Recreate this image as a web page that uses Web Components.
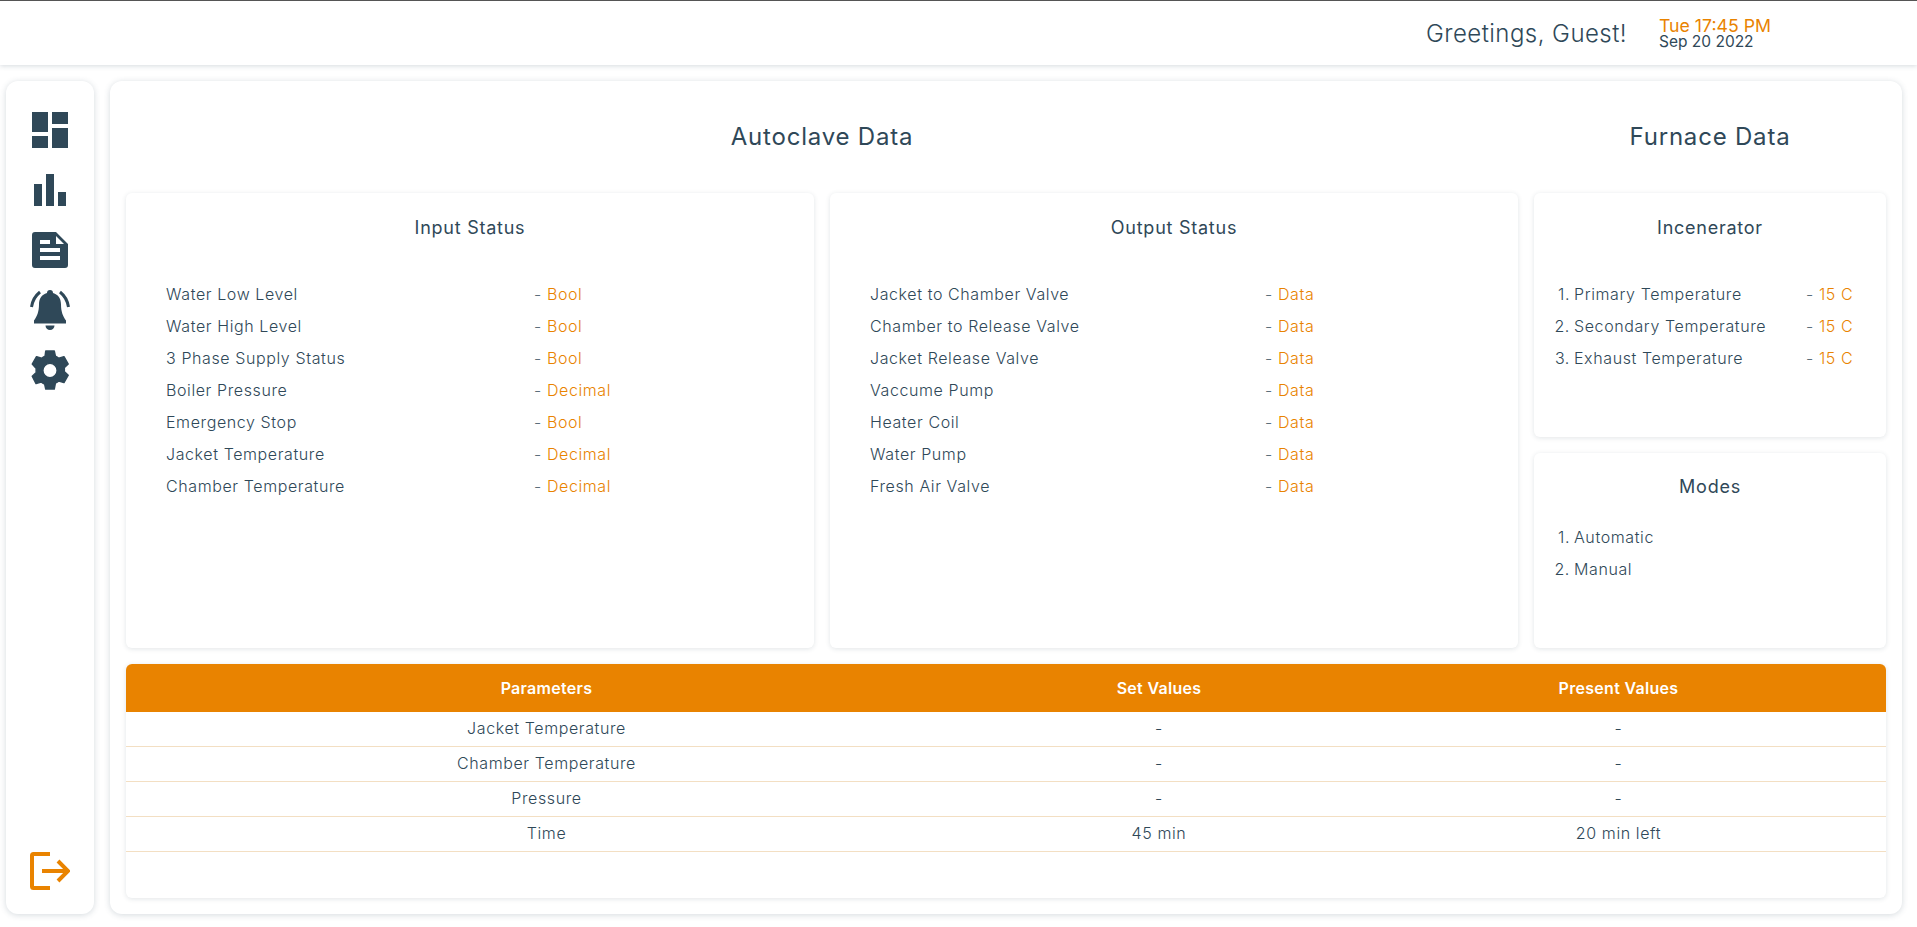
<!DOCTYPE html>
<html>
<head>
<meta charset="utf-8">
<title>Dashboard</title>
<style>
  html, body { margin: 0; height: 100%; }
  body {
    background: #fff;
    color: #2f4858;
    font-family: Inter, "Noto Sans", sans-serif;
    font-weight: 300;
    font-size: 16px;
  }
  #app { height: 927px; display: flex; flex-direction: column; overflow: hidden; }
  #content { flex: 1; display: flex; gap: 16px; padding: 16px 15px 13px 6px; min-height: 0; }
</style>
</head>
<body>

<template id="tpl-header">
  <style>
    :host {
      display: flex; align-items: center; justify-content: flex-end;
      height: 65px; box-sizing: border-box;
      border-top: 1px solid #555;
      background: #fff;
      box-shadow: 0 1px 5px rgba(47, 72, 88, .2);
      padding-right: 130px;
      flex: none;
    }
    .hello { font-size: 24px; letter-spacing: .45px; margin-right: 32px; padding-top: 1px; }
    .clock { display: flex; flex-direction: column; width: 128px; font-weight: 400; line-height: 16px; padding-top: 1px; }
    .time { color: #e98300; font-size: 17.7px; }
    .date { font-size: 15.5px; }
  </style>
  <span class="hello"><slot name="hello"></slot></span>
  <div class="clock">
    <span class="time"><slot name="time"></slot></span>
    <span class="date"><slot name="date"></slot></span>
  </div>
</template>

<template id="tpl-sidenav">
  <style>
    :host {
      display: flex; flex-direction: column; justify-content: space-between; align-items: center;
      width: 88px; flex: none; box-sizing: border-box;
      padding: 31px 0 24px;
      background: #fff; border-radius: 12px;
      box-shadow: 0 1px 6px rgba(47, 72, 88, .2);
    }
    .top { display: flex; flex-direction: column; gap: 26px; align-items: center; }
    svg { display: block; fill: #2f4858; }
    .bell { margin-top: -4px; }
    .gear { margin-top: -6px; }
    .out { fill: none; stroke: #e98300; stroke-width: 4; }
  </style>
  <div class="top">
    <svg width="36" height="36" viewBox="3 3 18 18"><path d="M3 13h8V3H3v10zm0 8h8v-6H3v6zm10 0h8V11h-8v10zm0-18v6h8V3h-8z"/></svg>
    <svg width="36" height="32" viewBox="0 0 36 32"><rect x="2" y="10" width="8" height="22"/><rect x="14" y="0" width="8" height="32"/><rect x="26" y="18" width="8" height="14"/></svg>
    <svg width="36" height="36" viewBox="0 0 36 36"><path fill-rule="evenodd" d="M3 0H24L36 12V33a3 3 0 0 1-3 3H3a3 3 0 0 1-3-3V3a3 3 0 0 1 3-3zM24 4V12H32zM8 8v4h10V8zM8 16v4h20v-4zM8 24v4h20v-4z"/></svg>
    <svg class="bell" width="40" height="40" viewBox="0 0 40 40"><path d="M20 0a3 3 0 0 1 3 3c5.5 1.5 8 6 8 11.5 0 7 2 12 5 16v3H4v-3c3-4 5-9 5-16 0-5.500 2.500-10 8-11.500a3 3 0 0 1 3-3zM15.500 35.500h9a4.500 4.500 0 0 1-9 0z"/><path d="M1.500 17C2.500 10 5 6 10 2M38.500 17C37.500 10 35 6 30 2" fill="none" stroke="#2f4858" stroke-width="3"/></svg>
    <svg class="gear" width="38" height="40" viewBox="-1 -1 40 42"><path fill-rule="evenodd" stroke="#2f4858" stroke-width="1.5" stroke-linejoin="round" d="M14.500 0h9l1.200 5.500c1.300.5 2.500 1.200 3.600 2.100l5.400-1.700 4.500 7.800-4.200 3.800c.2 1.400.2 2.800 0 4.200l4.200 3.800-4.500 7.800-5.400-1.700c-1.100.9-2.300 1.600-3.600 2.100L23.500 40h-9l-1.200-5.300c-1.300-.5-2.500-1.200-3.600-2.100l-5.400 1.700L.3 26.500l4.200-3.800c-.2-1.400-.2-2.800 0-4.200L.3 13.700l4.500-7.800 5.400 1.700c1.100-.9 2.300-1.600 3.600-2.100zM19 13a7.500 7.500 0 1 0 0 15 7.500 7.500 0 0 0 0-15z"/></svg>
  </div>
  <svg class="out" width="40" height="38" viewBox="0 0 40 38"><path d="M20 2H3.500a1.500 1.500 0 0 0-1.500 1.500v31A1.500 1.500 0 0 0 3.500 36H20M12 19h26M28 9l10 10-10 10"/></svg>
</template>

<template id="tpl-card">
  <style>
    :host {
      display: flex; flex-direction: column; box-sizing: border-box; min-height: 0;
      background: #fff; border-radius: 6px;
      box-shadow: 0 1px 5px rgba(47, 72, 88, .14);
    }
    h2 {
      margin: 0; font-size: 18px; font-weight: 400; text-align: center;
      letter-spacing: .75px; line-height: 24px;
      padding-top: var(--title-top, 23px);
      padding-bottom: var(--title-gap, 38px);
    }
    .body { padding-left: var(--body-left, 40px); }
  </style>
  <h2 id="title"></h2>
  <div class="body"><slot></slot></div>
</template>

<template id="tpl-row">
  <style>
    :host {
      display: grid; grid-template-columns: var(--label-col, 368px) auto;
      height: 32px; align-items: center;
      font-size: 16px; letter-spacing: .6px;
      white-space: nowrap;
    }
    .label { position: relative; }
    .num { position: absolute; right: 100%; margin-right: 4px; }
    .dash { color: #5c6f7b; }
    .val { color: #e98300; }
  </style>
  <div class="label"><span class="num" id="num"></span><span id="label"></span></div>
  <div id="right"><span class="dash">-</span> <span class="val" id="val"></span></div>
</template>

<template id="tpl-table">
  <style>
    :host {
      display: block; height: 234px; box-sizing: border-box; flex: none;
      background: #fff; border-radius: 6px; overflow: hidden;
      box-shadow: 0 1px 5px rgba(47, 72, 88, .14);
    }
    table { width: 100%; border-collapse: collapse; table-layout: fixed; }
    th {
      background: #e98300; color: #fff; height: 48px; padding: 0;
      font-size: 16px; font-weight: 600; letter-spacing: .3px;
    }
    td {
      height: 31px; padding: 0 0 3px; text-align: center;
      font-size: 16px; letter-spacing: .6px;
      border-bottom: 1px solid #f3dfc3;
    }
    col.a { width: 841px; }
    col.b { width: 384px; }
  </style>
  <table>
    <colgroup><col class="a"><col class="b"><col></colgroup>
    <thead><tr><th>Parameters</th><th>Set Values</th><th>Present Values</th></tr></thead>
    <tbody id="rows"></tbody>
  </table>
</template>

<template id="tpl-panel">
  <style>
    :host {
      flex: 1; min-width: 0; display: flex; flex-direction: column; box-sizing: border-box;
      padding: 0 16px 16px;
      background: #fff; border-radius: 12px;
      box-shadow: 0 1px 6px rgba(47, 72, 88, .2);
    }
    .heads { display: grid; grid-template-columns: 1fr 352px; column-gap: 16px; height: 112px; flex: none; }
    h1 {
      margin: 0; font-size: 24px; font-weight: 400; text-align: center;
      line-height: 112px; letter-spacing: .8px;
    }
    .grid {
      flex: 1; min-height: 0; display: grid; gap: 16px; margin-bottom: 16px;
      grid-template-columns: 688px 688px 352px;
      grid-template-rows: 244px 195px;
    }
    ::slotted(.span) { grid-row: 1 / span 2; }
  </style>
  <div class="heads"><h1>Autoclave Data</h1><h1>Furnace Data</h1></div>
  <div class="grid"><slot name="cards"></slot></div>
  <slot name="table"></slot>
</template>

<div id="app">
  <app-header>
    <span slot="hello">Greetings, Guest!</span>
    <span slot="time">Tue 17:45 PM</span>
    <span slot="date">Sep 20 2022</span>
  </app-header>
  <div id="content">
    <side-nav></side-nav>
    <main-panel>
      <status-card slot="cards" class="span" heading="Input Status">
        <status-row label="Water Low Level" value="Bool"></status-row>
        <status-row label="Water High Level" value="Bool"></status-row>
        <status-row label="3 Phase Supply Status" value="Bool"></status-row>
        <status-row label="Boiler Pressure" value="Decimal"></status-row>
        <status-row label="Emergency Stop" value="Bool"></status-row>
        <status-row label="Jacket Temperature" value="Decimal"></status-row>
        <status-row label="Chamber Temperature" value="Decimal"></status-row>
      </status-card>
      <status-card slot="cards" class="span" heading="Output Status" style="--body-left:40px;--label-col:395px">
        <status-row label="Jacket to Chamber Valve" value="Data"></status-row>
        <status-row label="Chamber to Release Valve" value="Data"></status-row>
        <status-row label="Jacket Release Valve" value="Data"></status-row>
        <status-row label="Vaccume Pump" value="Data"></status-row>
        <status-row label="Heater Coil" value="Data"></status-row>
        <status-row label="Water Pump" value="Data"></status-row>
        <status-row label="Fresh Air Valve" value="Data"></status-row>
      </status-card>
      <status-card slot="cards" heading="Incenerator" style="--label-col:232px">
        <status-row num="1." label="Primary Temperature" value="15 C"></status-row>
        <status-row num="2." label="Secondary Temperature" value="15 C"></status-row>
        <status-row num="3." label="Exhaust Temperature" value="15 C"></status-row>
      </status-card>
      <status-card slot="cards" heading="Modes" style="--title-top:22px;--title-gap:22px">
        <status-row num="1." label="Automatic"></status-row>
        <status-row num="2." label="Manual"></status-row>
      </status-card>
      <data-table slot="table"></data-table>
    </main-panel>
  </div>
</div>

<script>
  function stamp(host, id) {
    const root = host.attachShadow({ mode: 'open' });
    root.appendChild(document.getElementById(id).content.cloneNode(true));
    return root;
  }

  class AppHeader extends HTMLElement {
    constructor() { super(); stamp(this, 'tpl-header'); }
  }

  class SideNav extends HTMLElement {
    constructor() { super(); stamp(this, 'tpl-sidenav'); }
  }

  class MainPanel extends HTMLElement {
    constructor() { super(); stamp(this, 'tpl-panel'); }
  }

  class StatusCard extends HTMLElement {
    constructor() { super(); stamp(this, 'tpl-card'); }
    connectedCallback() {
      this.shadowRoot.getElementById('title').textContent = this.getAttribute('heading');
    }
  }

  class StatusRow extends HTMLElement {
    constructor() { super(); stamp(this, 'tpl-row'); }
    connectedCallback() {
      const root = this.shadowRoot;
      root.getElementById('label').textContent = this.getAttribute('label');
      root.getElementById('num').textContent = this.getAttribute('num') || '';
      if (this.hasAttribute('value')) root.getElementById('val').textContent = this.getAttribute('value');
      else root.getElementById('right').remove();
    }
  }

  class DataTable extends HTMLElement {
    constructor() { super(); stamp(this, 'tpl-table'); }
    connectedCallback() {
      const rows = [
        ['Jacket Temperature', '-', '-'],
        ['Chamber Temperature', '-', '-'],
        ['Pressure', '-', '-'],
        ['Time', '45 min', '20 min left']
      ];
      const body = this.shadowRoot.getElementById('rows');
      for (const row of rows) {
        const tr = document.createElement('tr');
        for (const cell of row) {
          const td = document.createElement('td');
          td.textContent = cell;
          tr.appendChild(td);
        }
        body.appendChild(tr);
      }
    }
  }

  customElements.define('app-header', AppHeader);
  customElements.define('side-nav', SideNav);
  customElements.define('main-panel', MainPanel);
  customElements.define('status-card', StatusCard);
  customElements.define('status-row', StatusRow);
  customElements.define('data-table', DataTable);
</script>
</body>
</html>
